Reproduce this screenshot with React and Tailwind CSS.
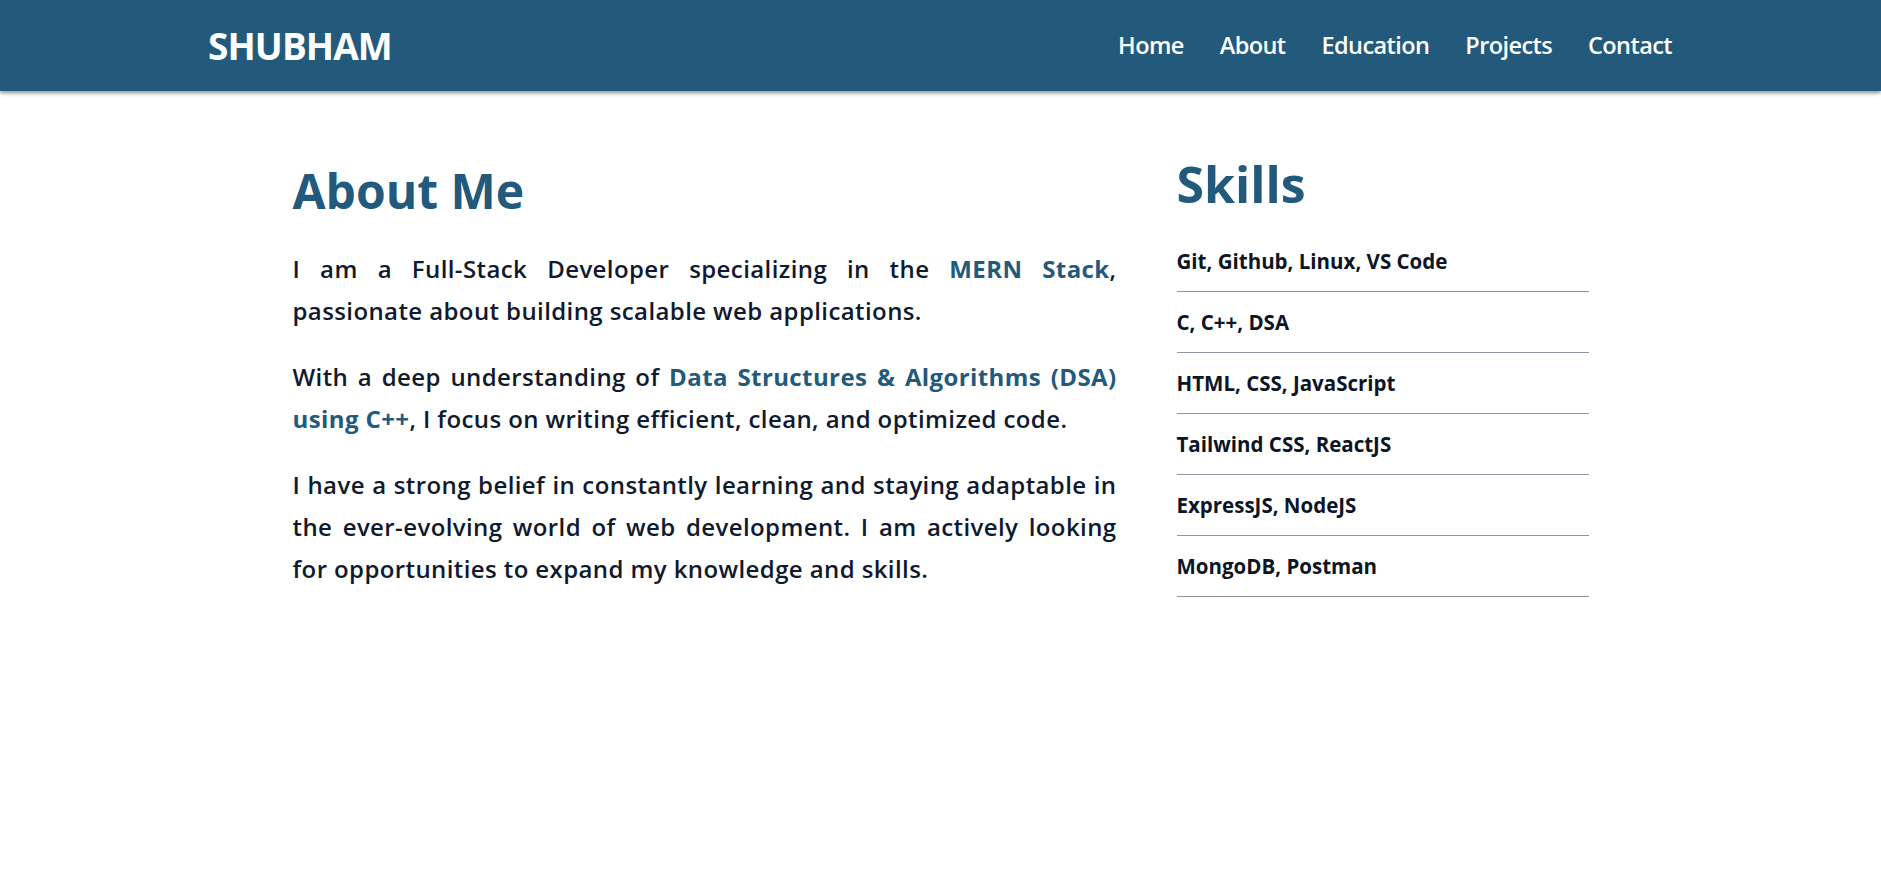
import React from 'react';

const navLinks = ['Home', 'About', 'Education', 'Projects', 'Contact'];

const skills = [
    'Git, Github, Linux, VS Code',
    'C, C++, DSA',
    'HTML, CSS, JavaScript',
    'Tailwind CSS, ReactJS',
    'ExpressJS, NodeJS',
    'MongoDB, Postman',
];

const Hl = ({ children }) => (
    <span className="text-[#235a7c] font-bold">{children}</span>
);

const App = () => {
    return (
        <div className="min-h-screen bg-white font-['Open_Sans',sans-serif]">
            <header className="h-[91px] bg-[#235a7c] shadow-[0_2px_4px_rgba(0,0,0,0.45)]">
                <div className="h-full flex items-center justify-between pl-[208px] pr-[209px]">
                    <h1 className="text-white font-bold text-[37px] tracking-tight">SHUBHAM</h1>
                    <nav className="flex items-center gap-[36px]">
                        {navLinks.map((link) => (
                            <a key={link} href="#" className="text-white text-[23.5px] font-semibold tracking-tight">
                                {link}
                            </a>
                        ))}
                    </nav>
                </div>
            </header>

            <main className="flex justify-center gap-[60px] pt-[58px]">
                <section className="w-[824px]">
                    <h2 className="text-[#235a7c] text-[48px] font-bold leading-none mt-[18px] mb-[33px]">About Me</h2>
                    <div className="text-[#0f1a2e] text-[24px] tracking-[0.4px] font-semibold leading-[42px] text-justify flex flex-col gap-[24px]">
                        <p>
                            I am a Full-Stack Developer specializing in the <Hl>MERN Stack</Hl>, passionate about building scalable web applications.
                        </p>
                        <p>
                            With a deep understanding of <Hl>Data Structures &amp; Algorithms (DSA) using C++</Hl>, I focus on writing efficient, clean, and optimized code.
                        </p>
                        <p>
                            I have a strong belief in constantly learning and staying adaptable in the ever-evolving world of web development. I am actively looking for opportunities to expand my knowledge and skills.
                        </p>
                    </div>
                </section>

                <section className="w-[412px]">
                    <h2 className="text-[#235a7c] text-[50px] font-bold leading-none mt-[10px] mb-[22px]">Skills</h2>
                    <ul className="flex flex-col">
                        {skills.map((skill) => (
                            <li key={skill} className="h-[61px] flex items-center border-b border-[#8c96a8] text-[#0b1526] text-[20.5px] font-bold">
                                {skill}
                            </li>
                        ))}
                    </ul>
                </section>
            </main>
        </div>
    );
};

export default App;
